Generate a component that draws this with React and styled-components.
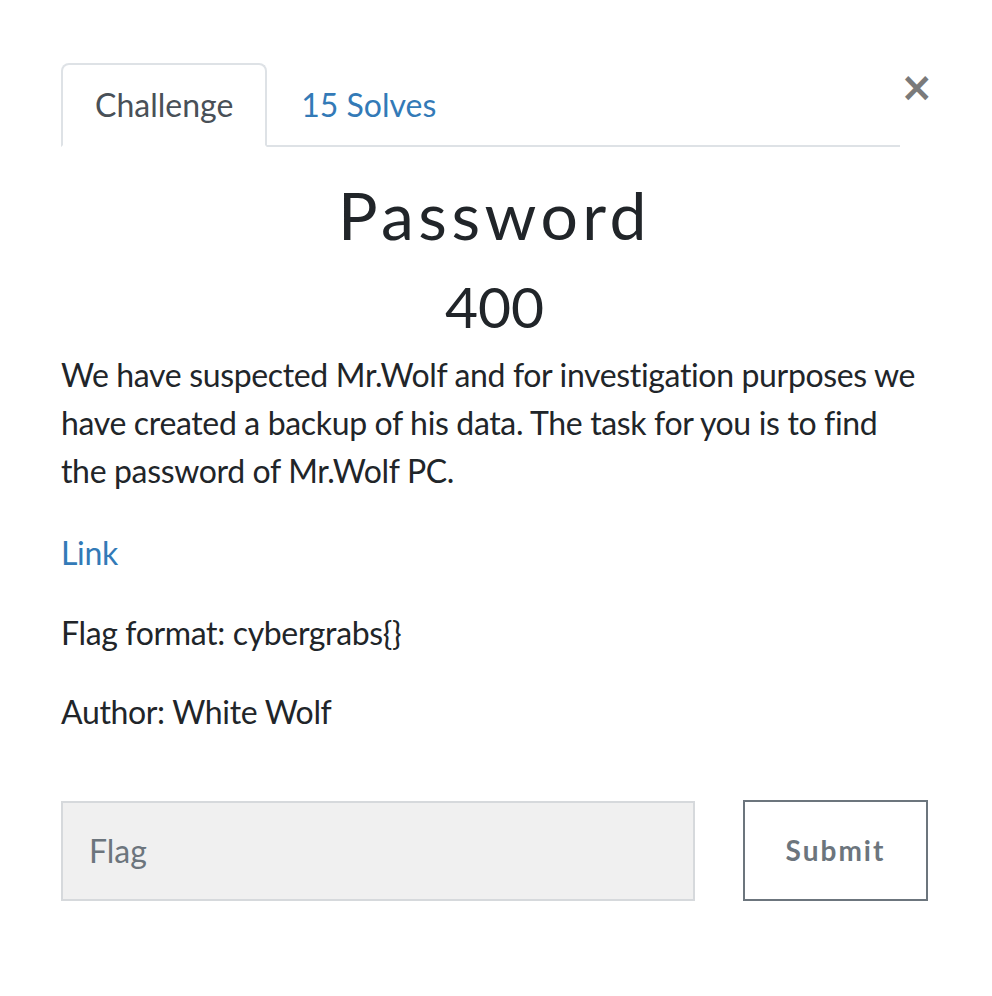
import React from "react";
import styled, { createGlobalStyle } from "styled-components";

const Global = createGlobalStyle`
  html, body { margin: 0; padding: 0; background: #fff; }
  body { font-family: Lato, "Noto Sans", sans-serif; color: #212529; }
  * { box-sizing: border-box; }
`;

const Page = styled.div`
  width: 992px;
  height: 996px;
  padding: 63px 64px 0 61px;
`;

const Header = styled.div`
  display: flex;
  align-items: flex-start;
`;

const Tabs = styled.nav`
  display: flex;
  flex: 0 0 839px;
  border-bottom: 2px solid #dee2e6;
`;

const Tab = styled.a`
  display: block;
  padding: 16px 32px;
  font-size: 32px;
  line-height: 48px;
  text-decoration: none;
  border: 2px solid ${(p) => (p.$active ? "#dee2e6" : "transparent")};
  border-bottom-color: ${(p) => (p.$active ? "#fff" : "transparent")};
  border-radius: 8px 8px 0 0;
  margin-bottom: -2px;
  background: ${(p) => (p.$active ? "#fff" : "transparent")};
  color: ${(p) => (p.$active ? "#495057" : "#337ab7")};
`;

const Close = styled.button`
  margin-left: auto;
  margin-right: 6px;
  margin-top: 4px;
  border: 0;
  background: none;
  padding: 0;
  font-family: "DejaVu Sans", sans-serif;
  font-weight: 700;
  font-size: 40px;
  line-height: 40px;
  color: #7a7a7a;
  cursor: pointer;
`;

const Title = styled.h3`
  margin: 28px 0 0;
  text-align: center;
  font-family: Lato, sans-serif;
  font-weight: 400;
  font-size: 66px;
  line-height: 1.2;
  letter-spacing: 4.5px;
  color: #212529;
`;

const Value = styled.h4`
  margin: 18px 0 0;
  text-align: center;
  font-weight: 400;
  font-size: 57px;
  line-height: 1.2;
  color: #212529;
`;

const Para = styled.p`
  margin: ${(p) => p.$mt}px 0 0;
  font-size: 32px;
  line-height: 48px;
  letter-spacing: -0.35px;
`;

const Link = styled.a`
  color: #337ab7;
  text-decoration: none;
`;

const Form = styled.form`
  display: flex;
  gap: 48px;
  margin-top: 65px;
`;

const Input = styled.input`
  width: 634px;
  height: 100px;
  background: #f0f0f0;
  border: 2px solid #d6d9dc;
  padding: 0 26px;
  font-family: Lato, sans-serif;
  font-size: 32px;
  color: #495057;
  outline: none;
  &::placeholder { color: #6c757d; }
`;

const Submit = styled.button`
  width: 185px;
  height: 101px;
  margin-top: -1px;
  background: #fff;
  border: 2px solid #6c757d;
  font-family: Lato, sans-serif;
  font-weight: 700;
  font-size: 28px;
  letter-spacing: 2px;
  color: #6c757d;
`;

export default function App() {
  return (
    <>
      <Global />
      <Page>
        <Header>
          <Tabs>
            <Tab $active href="#">Challenge</Tab>
            <Tab href="#">15 Solves</Tab>
          </Tabs>
          <Close aria-label="Close">×</Close>
        </Header>
        <Title>Password</Title>
        <Value>400</Value>
        <Para $mt={10}>
          We have suspected Mr.Wolf and for investigation purposes we have created a backup of his data. The task for you is to find the password of Mr.Wolf PC.
        </Para>
        <Para $mt={34}><Link href="#">Link</Link></Para>
        <Para $mt={32}>Flag format: cybergrabs{"{}"}</Para>
        <Para $mt={31}>Author: White Wolf</Para>
        <Form onSubmit={(e) => e.preventDefault()}>
          <Input placeholder="Flag" />
          <Submit type="submit">Submit</Submit>
        </Form>
      </Page>
    </>
  );
}
